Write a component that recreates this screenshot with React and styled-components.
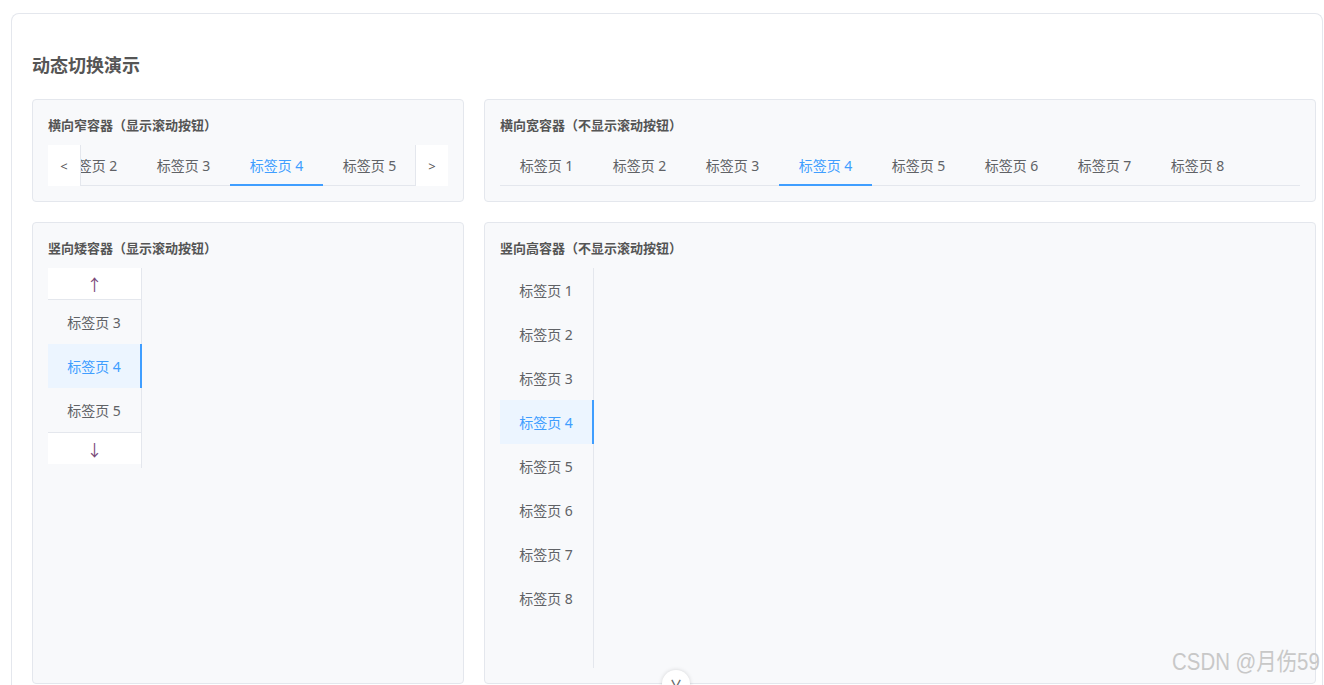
import React from "react";
import styled, { createGlobalStyle } from "styled-components";

const Global = createGlobalStyle`
  html,body{margin:0;padding:0;background:#fff;overflow:hidden;}
  body{font-family:"Noto Sans","Noto Sans CJK SC",sans-serif;}
`;
const Page = styled.div`padding:13px 1px 0 11px;height:685px;box-sizing:border-box;position:relative;`;
const Card = styled.div`border:1px solid #e4e7ed;border-bottom:none;border-radius:8px 8px 0 0;padding:35px 6px 0 20px;height:672px;box-sizing:border-box;`;
const Title = styled.h2`margin:0 0 18px;font-size:18px;font-weight:700;color:#555;line-height:32px;`;
const Grid = styled.div`display:grid;grid-template-columns:432px 832px;gap:20px;`;
const Panel = styled.div`border:1px solid #e4e7ed;border-radius:4px;background:#f8f9fb;padding:15px 15px 15px;box-sizing:border-box;height:${p=>p.$h}px;`;
const Label = styled.div`font-size:13px;font-weight:700;color:#555;line-height:20px;margin-bottom:10px;`;
const HBar = styled.div`display:flex;height:41px;`;
const ScrollBtn = styled.div`width:32px;flex:none;background:#fff;display:flex;align-items:center;justify-content:center;font-size:13px;color:#555;${p=>p.$left?"border-right:1px solid #e4e7ed;":"border-left:1px solid #e4e7ed;"}`;
const HTabs = styled.div`flex:1;display:flex;overflow:hidden;box-shadow:inset 0 -1px 0 #e4e7ed;`;
const HInner = styled.div`display:flex;margin-left:${p=>p.$off||0}px;`;
const HTab = styled.div`width:93px;flex:none;display:flex;align-items:center;justify-content:center;font-size:14px;color:${p=>p.$a?"#409eff":"#606266"};border-bottom:2px solid ${p=>p.$a?"#409eff":"transparent"};box-sizing:border-box;`;
const VCol = styled.div`width:94px;border-right:1px solid #e4e7ed;box-sizing:border-box;height:${p=>p.$h}px;`;
const VBtn = styled.div`height:32px;background:#fff;display:flex;align-items:center;justify-content:center;font-size:16px;color:#7a4a7a;border-${p=>p.$top?"bottom":"top"}:1px solid #e4e7ed;box-sizing:border-box;`;
const VTab = styled.div`height:44px;display:flex;align-items:center;justify-content:center;font-size:14px;color:${p=>p.$a?"#409eff":"#606266"};background:${p=>p.$a?"#ecf5ff":"transparent"};margin-right:-1px;border-right:2px solid ${p=>p.$a?"#409eff":"transparent"};`;
const Mark = styled.div`position:absolute;right:4px;bottom:8px;font-size:24px;color:#c8c8c8;font-family:"Liberation Sans","Noto Sans CJK SC",sans-serif;transform:scaleX(0.85);transform-origin:right bottom;`;
const Dot = styled.div`position:absolute;left:662px;top:670px;width:28px;height:28px;border-radius:50%;background:#fff;box-shadow:0 0 4px rgba(0,0,0,.15);display:flex;justify-content:center;padding-top:5px;box-sizing:border-box;font-size:12px;font-weight:700;color:#666;`;

const t = n => `标签页 ${n}`;
export default function App(){
  return <Page><Global/><Card>
    <Title>动态切换演示</Title>
    <Grid>
      <Panel $h={103}>
        <Label>横向窄容器（显示滚动按钮）</Label>
        <HBar><ScrollBtn $left>&lt;</ScrollBtn><HTabs><HInner $off={-130}>{[1,2,3,4,5,6].map(n=><HTab key={n} $a={n===4}>{t(n)}</HTab>)}</HInner></HTabs><ScrollBtn>&gt;</ScrollBtn></HBar>
      </Panel>
      <Panel $h={103}>
        <Label>横向宽容器（不显示滚动按钮）</Label>
        <HBar><HTabs><HInner>{[1,2,3,4,5,6,7,8].map(n=><HTab key={n} $a={n===4}>{t(n)}</HTab>)}</HInner></HTabs></HBar>
      </Panel>
      <Panel $h={462}>
        <Label>竖向矮容器（显示滚动按钮）</Label>
        <VCol $h={200}>
          <VBtn $top>↑</VBtn>
          {[3,4,5].map(n=><VTab key={n} $a={n===4}>{t(n)}</VTab>)}
          <VBtn>↓</VBtn>
        </VCol>
      </Panel>
      <Panel $h={462}>
        <Label>竖向高容器（不显示滚动按钮）</Label>
        <VCol $h={400}>
          {[1,2,3,4,5,6,7,8].map(n=><VTab key={n} $a={n===4}>{t(n)}</VTab>)}
        </VCol>
      </Panel>
    </Grid>
  </Card>
  <Dot>∨</Dot>
  <Mark>CSDN @月伤59</Mark>
  </Page>;
}
